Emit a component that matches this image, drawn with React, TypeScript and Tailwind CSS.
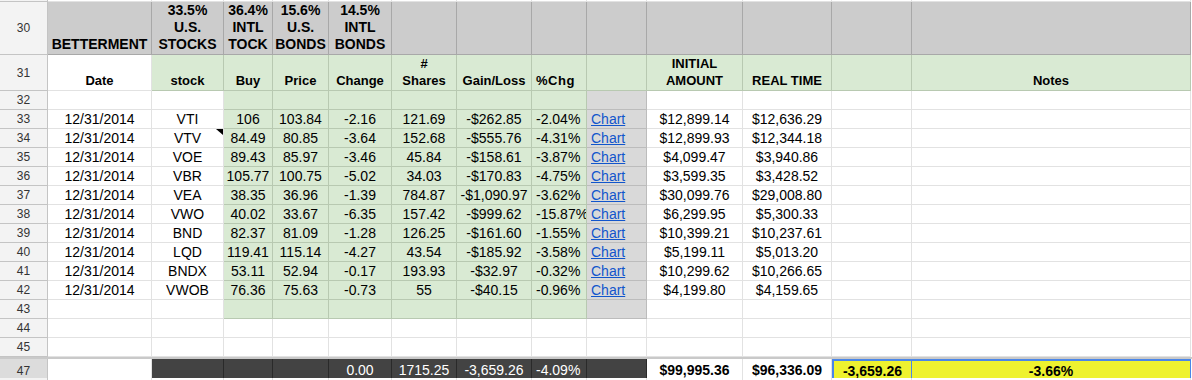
import clsx from "clsx";
import type { ReactNode } from "react";

type Fill = "white" | "green" | "gray" | "chart" | "dark" | "yellow";

const fills: Record<Fill, string> = {
  white: "bg-white border-[#e2e2e2]",
  green: "bg-[#d9ead3] border-[#b8c9b1]",
  gray: "bg-[#cccccc] border-[#a8a8a8]",
  chart: "bg-[#d9d9d9] border-[#bcbcbc]",
  dark: "bg-[#434343] border-[#2a2a2a] text-white",
  yellow: "bg-[#eef22f] border-[#4a86e8]",
};

const GRID =
  "grid grid-cols-[48px_104px_72px_49px_56px_63px_65px_75px_55px_60px_96px_89px_80px_279px]";

const stocks = [
  ["VTI", "106", "103.84", "-2.16", "121.69", "-$262.85", "-2.04%", "$12,899.14", "$12,636.29"],
  ["VTV", "84.49", "80.85", "-3.64", "152.68", "-$555.76", "-4.31%", "$12,899.93", "$12,344.18"],
  ["VOE", "89.43", "85.97", "-3.46", "45.84", "-$158.61", "-3.87%", "$4,099.47", "$3,940.86"],
  ["VBR", "105.77", "100.75", "-5.02", "34.03", "-$170.83", "-4.75%", "$3,599.35", "$3,428.52"],
  ["VEA", "38.35", "36.96", "-1.39", "784.87", "-$1,090.97", "-3.62%", "$30,099.76", "$29,008.80"],
  ["VWO", "40.02", "33.67", "-6.35", "157.42", "-$999.62", "-15.87%", "$6,299.95", "$5,300.33"],
  ["BND", "82.37", "81.09", "-1.28", "126.25", "-$161.60", "-1.55%", "$10,399.21", "$10,237.61"],
  ["LQD", "119.41", "115.14", "-4.27", "43.54", "-$185.92", "-3.58%", "$5,199.11", "$5,013.20"],
  ["BNDX", "53.11", "52.94", "-0.17", "193.93", "-$32.97", "-0.32%", "$10,299.62", "$10,266.65"],
  ["VWOB", "76.36", "75.63", "-0.73", "55", "-$40.15", "-0.96%", "$4,199.80", "$4,159.65"],
];

function Cell({
  fill = "white",
  left,
  className,
  children,
}: {
  fill?: Fill;
  left?: boolean;
  className?: string;
  children?: ReactNode;
}) {
  return (
    <div
      className={clsx(
        "relative flex items-center overflow-hidden whitespace-nowrap border-r border-b",
        fills[fill],
        left ? "justify-start pl-[4px]" : "justify-center",
        className
      )}
    >
      {children}
    </div>
  );
}

function Row({
  num,
  height,
  headBg = "bg-[#f3f3f3]",
  children,
}: {
  num?: string;
  height: string;
  headBg?: string;
  children: ReactNode;
}) {
  return (
    <div className={clsx(GRID, height)}>
      <div
        className={clsx(
          "flex items-center justify-center border-r border-b border-[#c4c4c4] text-[12px] text-[#333]",
          headBg
        )}
      >
        {num}
      </div>
      {children}
    </div>
  );
}

function Stack({ lines, size }: { lines: string[]; size: string }) {
  return (
    <div className={clsx("flex flex-col items-center self-end pb-[1px] font-bold leading-[17px]", size)}>
      {lines.map((l, i) => (
        <span key={i}>{l}</span>
      ))}
    </div>
  );
}

// fills for the empty/colored block rows 32..43
function blockFills(i: number): Fill {
  if (i >= 2 && i <= 7) return "green";
  if (i === 8) return "chart";
  return "white";
}

export default function App() {
  const empty = Array.from({ length: 13 });

  return (
    <div className="w-[1192px] h-[380px] overflow-hidden bg-white font-['Liberation_Sans',Arial,sans-serif] text-[14px] text-black">
      {/* tail of row 29 */}
      <Row height="h-[2px]">
        {empty.map((_, i) => (
          <Cell key={i} className="border-[#bdbdbd]" />
        ))}
      </Row>

      {/* row 30: allocations */}
      <Row num="30" height="h-[53px]">
        <Cell fill="gray">
          <Stack lines={["BETTERMENT"]} size="text-[14px]" />
        </Cell>
        <Cell fill="gray">
          <Stack lines={["33.5%", "U.S.", "STOCKS"]} size="text-[14px]" />
        </Cell>
        <Cell fill="gray">
          <Stack lines={["36.4%", "INTL", "TOCK"]} size="text-[14px]" />
        </Cell>
        <Cell fill="gray">
          <Stack lines={["15.6%", "U.S.", "BONDS"]} size="text-[14px]" />
        </Cell>
        <Cell fill="gray">
          <Stack lines={["14.5%", "INTL", "BONDS"]} size="text-[14px]" />
        </Cell>
        {Array.from({ length: 8 }).map((_, i) => (
          <Cell key={i} fill="gray" />
        ))}
      </Row>

      {/* row 31: column titles */}
      <Row num="31" height="h-[36px]">
        <Cell>
          <Stack lines={["Date"]} size="text-[13px]" />
        </Cell>
        <Cell fill="green">
          <Stack lines={["stock"]} size="text-[13px]" />
        </Cell>
        <Cell fill="green">
          <Stack lines={["Buy"]} size="text-[13px]" />
        </Cell>
        <Cell fill="green">
          <Stack lines={["Price"]} size="text-[13px]" />
        </Cell>
        <Cell fill="green">
          <Stack lines={["Change"]} size="text-[13px]" />
        </Cell>
        <Cell fill="green">
          <Stack lines={["#", "Shares"]} size="text-[13px]" />
        </Cell>
        <Cell fill="green">
          <Stack lines={["Gain/Loss"]} size="text-[13px]" />
        </Cell>
        <Cell fill="green" left className="pl-[2px]">
          <Stack lines={["%Chg"]} size="text-[13px] tracking-[0.5px]" />
        </Cell>
        <Cell fill="green" />
        <Cell fill="green">
          <Stack lines={["INITIAL", "AMOUNT"]} size="text-[13px]" />
        </Cell>
        <Cell fill="green">
          <Stack lines={["REAL TIME"]} size="text-[13px]" />
        </Cell>
        <Cell fill="green" />
        <Cell fill="green">
          <Stack lines={["Notes"]} size="text-[13px]" />
        </Cell>
      </Row>

      <Row num="32" height="h-[19px]">
        {empty.map((_, i) => (
          <Cell key={i} fill={blockFills(i)} />
        ))}
      </Row>

      {stocks.map((s, r) => (
        <Row key={s[0]} num={String(33 + r)} height="h-[19px]">
          <Cell>12/31/2014</Cell>
          <Cell>
            {s[0]}
            {s[0] === "VTV" && (
              <span className="absolute right-0 top-0 h-0 w-0 border-l-[7px] border-t-[6px] border-l-transparent border-t-black" />
            )}
          </Cell>
          <Cell fill="green">{s[1]}</Cell>
          <Cell fill="green">{s[2]}</Cell>
          <Cell fill="green">{s[3]}</Cell>
          <Cell fill="green">{s[4]}</Cell>
          <Cell fill="green">{s[5]}</Cell>
          <Cell fill="green" left>
            {s[6]}
          </Cell>
          <Cell fill="chart" left className="pl-[3px]">
            <span className="text-[#1155cc] underline">Chart</span>
          </Cell>
          <Cell>{s[7]}</Cell>
          <Cell>{s[8]}</Cell>
          <Cell />
          <Cell />
        </Row>
      ))}

      <Row num="43" height="h-[19px]">
        {empty.map((_, i) => (
          <Cell key={i} fill={blockFills(i)} />
        ))}
      </Row>
      {["44", "45"].map((n) => (
        <Row key={n} num={n} height="h-[19px]">
          {empty.map((_, i) => (
            <Cell key={i} />
          ))}
        </Row>
      ))}

      {/* hidden row 46 */}
      <div className="h-[2px] bg-[#c9c9c9]" />

      {/* row 47: totals */}
      <Row num="47" height="h-[19px]" headBg="bg-[#dcdcdc]">
        <Cell />
        <Cell fill="dark" />
        <Cell fill="dark" />
        <Cell fill="dark" />
        <Cell fill="dark">0.00</Cell>
        <Cell fill="dark">1715.25</Cell>
        <Cell fill="dark">-3,659.26</Cell>
        <Cell fill="dark" left>
          -4.09%
        </Cell>
        <Cell fill="dark" />
        <Cell className="font-bold">$99,995.36</Cell>
        <Cell className="font-bold">$96,336.09</Cell>
        <Cell fill="yellow" className="border-2 font-bold">
          -3,659.26
        </Cell>
        <Cell fill="yellow" className="overflow-visible border-2 border-l-0 font-bold">
          -3.66%
          <span className="absolute -bottom-[4px] -right-[3px] h-[6px] w-[6px] border border-white bg-[#4a86e8]" />
        </Cell>
      </Row>

      <Row height="h-[19px]">
        {empty.map((_, i) => (
          <Cell key={i} />
        ))}
      </Row>
    </div>
  );
}
